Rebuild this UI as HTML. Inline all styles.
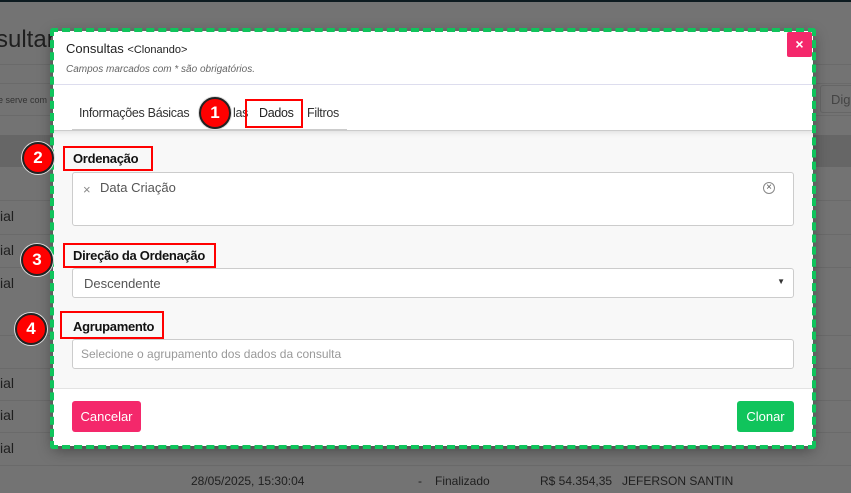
<!DOCTYPE html>
<html><head><meta charset="utf-8"><style>
*{box-sizing:border-box;margin:0;padding:0}
body{width:851px;height:493px;overflow:hidden;background:#737373;font-family:"Liberation Sans",sans-serif;position:relative;color:#222}
.a{position:absolute}
.line{position:absolute;left:0;width:851px;height:1px;background:#6a6a6a}
.bg{color:#1f1f1f;font-size:14px}
.modal{left:53px;top:31px;width:760px;height:415px;background:#fff}
.dash{left:50px;top:28px;width:766px;height:421px;border:4px dashed #10c45c;border-radius:3px}
.lbl{font-weight:bold;font-size:13px;color:#111;letter-spacing:-0.3px}
.inp{position:absolute;left:72px;width:722px;background:#fff;border:1px solid #ccc;border-radius:3px;font-size:13px;color:#555}
.rb{position:absolute;border:2px solid #f00}
.circ{position:absolute;width:32px;height:32px;border-radius:50%;background:#f00;border:2px solid #222;box-shadow:0 0 0 1px #ddd;color:#fff;font-weight:bold;font-size:17px;text-align:center;line-height:28px}
.tab{position:absolute;top:75px;font-size:12.5px;color:#333;letter-spacing:-0.3px}
</style></head><body>
<div class="a" style="left:0;top:0;width:851px;height:2px;background:#0d1b20"></div>
<div class="a bg" style="left:-4px;top:26px;font-size:24px">sultar</div>
<div class="line" style="top:64px"></div>
<div class="line" style="top:83px"></div>
<div class="a bg" style="left:-2px;top:95px;font-size:9px;color:#333">e serve com</div>
<div class="line" style="top:115px"></div>
<div class="a" style="left:0;top:135px;width:851px;height:32px;background:#666"></div>
<div class="a" style="left:820px;top:85px;width:40px;height:28px;border:1px solid #666;border-radius:3px;color:#444;font-size:13px;padding:6px 10px">Dig</div>
<div class="line" style="top:200px"></div><div class="line" style="top:234px"></div><div class="line" style="top:267px"></div>
<div class="line" style="top:335px"></div><div class="line" style="top:368px"></div><div class="line" style="top:400px"></div><div class="line" style="top:432px"></div><div class="line" style="top:465px"></div>
<div class="a bg" style="left:0;top:208px">ial</div><div class="a bg" style="left:0;top:242px">ial</div><div class="a bg" style="left:0;top:275px">ial</div>
<div class="a bg" style="left:0;top:375px">ial</div><div class="a bg" style="left:0;top:407px">ial</div><div class="a bg" style="left:0;top:440px">ial</div>
<div class="a bg" style="left:191px;top:474px;font-size:12px">28/05/2025, 15:30:04</div>
<div class="a bg" style="left:418px;top:474px;font-size:12px">-</div>
<div class="a bg" style="left:435px;top:474px;font-size:12px">Finalizado</div>
<div class="a bg" style="left:540px;top:474px;font-size:12px">R$ 54.354,35</div>
<div class="a bg" style="left:622px;top:474px;font-size:12px">JEFERSON SANTIN</div>

<div class="a modal" style="box-shadow:0 4px 14px rgba(0,0,0,.4)">
  <div class="a" style="left:13px;top:10px;font-size:13px;color:#222">Consultas <span style="font-size:11px">&lt;Clonando&gt;</span></div>
  <div class="a" style="left:13px;top:33px;font-size:10px;font-style:italic;color:#666">Campos marcados com * são obrigatórios.</div>
  <div class="a" style="left:734px;top:1px;width:25px;height:25px;background:#f4286b;border-radius:2px;color:#fff;font-weight:bold;font-size:14px;text-align:center;line-height:24px">×</div>
  <div class="a" style="left:0;top:53px;width:760px;height:1px;background:#dde"></div>
  <div class="tab" style="left:26px">Informações Básicas</div>
  <div class="tab" style="left:180px">las</div>
  <div class="tab" style="left:206px;color:#222">Dados</div>
  <div class="tab" style="left:254px">Filtros</div>
  <div class="a" style="left:19px;top:98px;width:275px;height:1px;background:#ccc"></div>
  <div class="a" style="left:0;top:99px;width:760px;height:258px;background:#f8f8f8;border-top:1px solid #ccc;box-shadow:inset 0 6px 8px -6px rgba(0,0,0,.15)"></div>
  <div class="a" style="left:0;top:357px;width:760px;height:1px;background:#e3e3e3"></div>
  <div class="a" style="left:19px;top:370px;width:69px;height:31px;background:#f4286b;border-radius:3px;color:#fff;font-size:13px;text-align:center;line-height:31px">Cancelar</div>
  <div class="a" style="left:684px;top:370px;width:57px;height:31px;background:#10c45c;border-radius:3px;color:#fff;font-size:13px;text-align:center;line-height:31px">Clonar</div>
</div>
<div class="a lbl" style="left:73px;top:151px">Ordenação</div>
<div class="inp" style="top:172px;height:54px"><span style="position:absolute;left:10px;top:9px;color:#888">×</span><span style="position:absolute;left:27px;top:7px">Data Criação</span><span style="position:absolute;left:690px;top:9px;width:12px;height:12px;border:1px solid #888;border-radius:50%;font-size:10px;line-height:10px;text-align:center;color:#555">×</span></div>
<div class="a lbl" style="left:73px;top:248px">Direção da Ordenação</div>
<div class="inp" style="top:268px;height:30px;padding:7px 11px">Descendente<span style="position:absolute;right:8px;top:8px;font-size:8px;color:#333">▼</span></div>
<div class="a lbl" style="left:73px;top:319px">Agrupamento</div>
<div class="inp" style="top:339px;height:30px;padding:7px 8px;color:#999;font-size:12px">Selecione o agrupamento dos dados da consulta</div>
<div class="a dash"></div>
<div class="rb" style="left:245px;top:99px;width:58px;height:29px"></div>
<div class="rb" style="left:63px;top:146px;width:90px;height:25px"></div>
<div class="rb" style="left:63px;top:243px;width:153px;height:25px"></div>
<div class="rb" style="left:60px;top:311px;width:104px;height:28px"></div>
<div class="circ" style="left:199px;top:97px">1</div>
<div class="circ" style="left:22px;top:142px">2</div>
<div class="circ" style="left:21px;top:244px">3</div>
<div class="circ" style="left:15px;top:313px">4</div>
</body></html>
